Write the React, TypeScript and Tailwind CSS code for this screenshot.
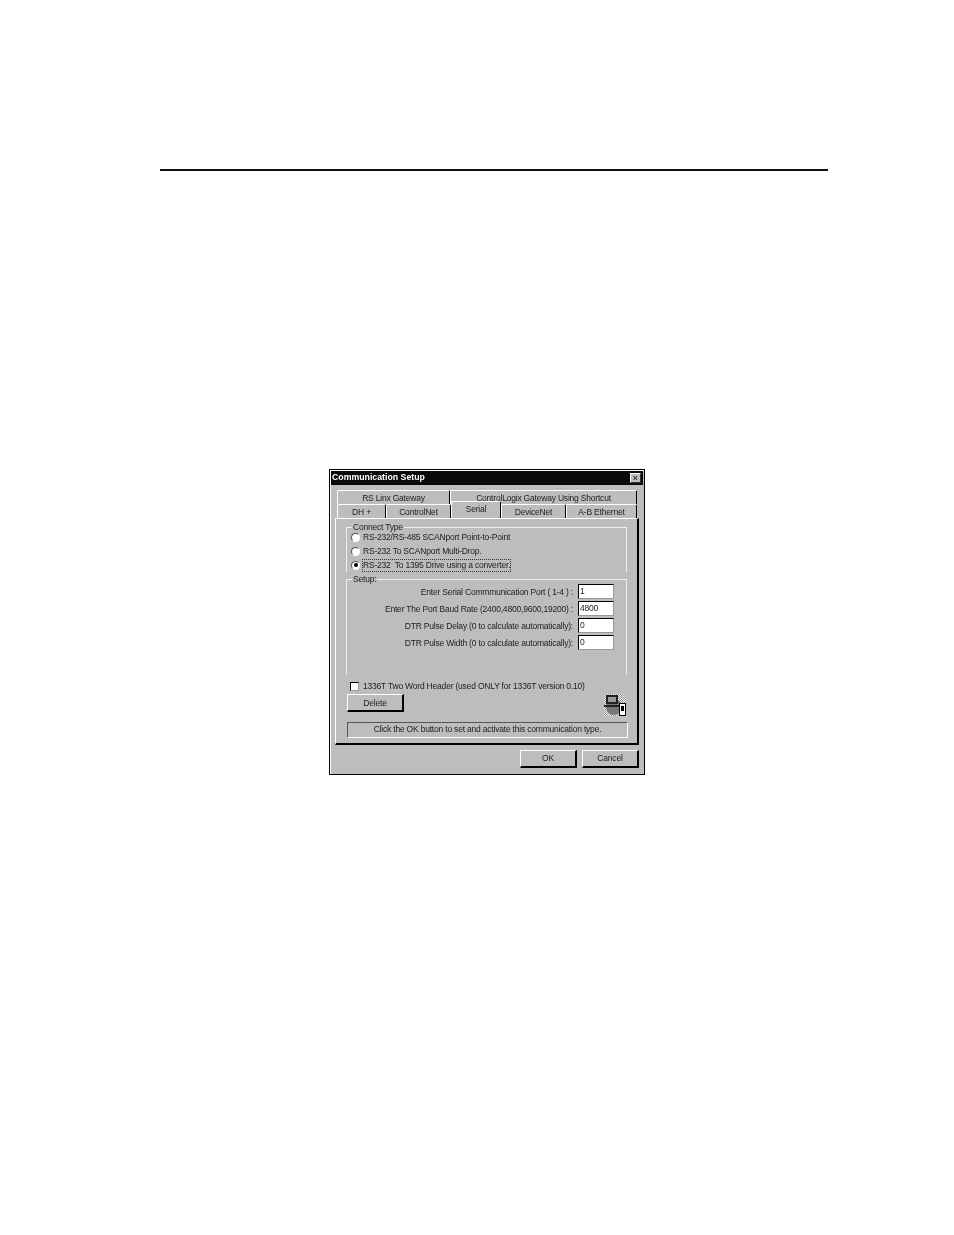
import { ReactNode } from "react";

const raised = "border border-t-white border-l-white border-r-black border-b-black";

const Tab = ({ label, width, active }: { label: string; width: string; active?: boolean }) => (
    <div
        className={`${width} shrink-0 flex items-center justify-center border-t border-l border-r border-t-white border-l-white border-r-black rounded-t-[2px] ${active ? "h-[17px] -mt-[3px] pb-[1px] relative z-10 bg-[#bdbdbd]" : "h-[14px] pt-[1px]"}`}
    >
        {label}
    </div>
);

const Radio = ({ label, checked, focused }: { label: string; checked?: boolean; focused?: boolean }) => (
    <div className="flex items-center h-[14px]">
        <span className="w-[9px] h-[9px] rounded-full bg-white border border-t-[#555] border-l-[#555] border-r-white border-b-white flex items-center justify-center shrink-0">
            {checked && <span className="w-[4px] h-[4px] rounded-full bg-black" />}
        </span>
        <span className={`ml-[2px] leading-[11px] ${focused ? "border border-dotted border-[#333]" : "border border-transparent"}`}>{label}</span>
    </div>
);

const Field = ({ label, value }: { label: string; value: string }) => (
    <div className="flex items-center justify-end h-[17px]">
        <span className="mr-[5px] mt-[1px]">{label}</span>
        <div className="w-[36px] h-[15px] bg-white border border-t-black border-l-black border-r-[#999] border-b-[#999] pl-[1px] leading-[13px]">{value}</div>
    </div>
);

const Button = ({ children, className }: { children: ReactNode; className: string }) => (
    <button className={`${className} h-[18px] flex items-center justify-center ${raised} border-r-2 border-b-2`}>{children}</button>
);

const DriveIcon = () => (
    <svg width="24" height="24" viewBox="0 0 24 24" className="shrink-0">
        <defs>
            <pattern id="dither" width="2" height="2" patternUnits="userSpaceOnUse">
                <rect width="2" height="2" fill="#eee" />
                <rect width="1" height="1" fill="#999" />
                <rect x="1" y="1" width="1" height="1" fill="#999" />
            </pattern>
        </defs>
        <rect x="1" y="1" width="22" height="22" fill="url(#dither)" />
        <circle cx="11" cy="14" r="8" fill="#777" />
        <rect x="3" y="2" width="12" height="9" fill="#222" />
        <rect x="5" y="4" width="8" height="5" fill="#999" />
        <path d="M1 12h15v2H1z" fill="#222" />
        <rect x="16.5" y="10.5" width="6" height="12" fill="#fff" stroke="#000" />
        <rect x="18" y="13" width="3" height="5" fill="#000" />
    </svg>
);

const App = () => {
    return (
        <div className="w-[954px] h-[1235px] bg-white pt-[169px] pl-[160px] font-['Liberation_Sans',sans-serif]">
            <div className="w-[668px] h-[2px] bg-[#111]" />

            <div className="ml-[169px] mt-[298px] w-[316px] h-[306px] bg-[#bdbdbd] border border-black p-[1px] shadow-[inset_1px_1px_0_#fff] text-[8.5px] tracking-[-0.2px] text-[#222] blur-[0.35px]">
                <div className="h-[14px] bg-[#0a0a0a] flex items-center justify-between pl-[1px] pr-[2px] text-white text-[8.75px] tracking-normal font-bold">
                    <span>Communication Setup</span>
                    <span className="w-[11px] h-[10px] bg-[#bdbdbd] border border-t-white border-l-white border-r-[#333] border-b-[#333] text-black text-[9px] leading-[8px] text-center font-normal">×</span>
                </div>

                <div className="pl-[4px] pt-[5px]">
                    <div className="flex h-[14px] pl-[2px]">
                        <Tab label="RS Linx Gateway" width="w-[113px]" />
                        <Tab label="ControlLogix Gateway Using Shortcut" width="w-[187px]" />
                    </div>
                    <div className="flex h-[14px] pl-[2px]">
                        <Tab label="DH +" width="w-[49px]" />
                        <Tab label="ControlNet" width="w-[65px]" />
                        <Tab label="Serial" width="w-[50px]" active />
                        <Tab label="DeviceNet" width="w-[65px]" />
                        <Tab label="A-B Ethernet" width="w-[71px]" />
                    </div>

                    <div className="w-[304px] h-[227px] border border-t-white border-l-white border-r-[2px] border-b-[2px] border-r-black border-b-black pl-[10px] pr-[10px]">
                        <fieldset className="w-[281px] h-[49px] border border-[#efefef] border-b-0 mt-[4px]">
                            <legend className="ml-[5px] px-[1px] leading-[8px]">Connect Type</legend>
                            <div className="pl-[4px] -mt-[1px]">
                                <Radio label="RS-232/RS-485 SCANport Point-to-Point" />
                                <Radio label="RS-232 To SCANport Multi-Drop." />
                                <Radio label={"RS-232\u00a0 To 1395 Drive using a converter."} checked focused />
                            </div>
                        </fieldset>

                        <fieldset className="w-[281px] h-[100px] border border-[#efefef] border-b-0 mt-[3px] pr-[12px]">
                            <legend className="ml-[5px] px-[1px] leading-[8px]">Setup:</legend>
                            <Field label="Enter Serial Commmunication Port ( 1-4 ) :" value="1" />
                            <Field label="Enter The Port Baud Rate (2400,4800,9600,19200) :" value="4800" />
                            <Field label="DTR Pulse Delay (0 to calculate automatically):" value="0" />
                            <Field label="DTR Pulse Width (0 to calculate automatically):" value="0" />
                        </fieldset>

                        <div className="flex items-center h-[12px] mt-[5px] pl-[4px]">
                            <span className="w-[9px] h-[9px] bg-white border border-t-black border-l-black border-r-[#999] border-b-[#999]" />
                            <span className="ml-[4px]">1336T Two Word Header (used ONLY for 1336T version 0.10)</span>
                        </div>

                        <div className="flex items-start justify-between mt-[1px] w-[281px]">
                            <Button className="w-[57px] mt-[1px] ml-[1px] pt-[1px]">Delete</Button>
                            <DriveIcon />
                        </div>

                        <div className="w-[281px] h-[16px] mt-[5px] ml-[1px] pb-[2px] border border-t-[#555] border-l-[#555] border-r-white border-b-white flex items-center justify-center">
                            Click the OK button to set and activate this communication type.
                        </div>
                    </div>

                    <div className="flex justify-end gap-[5px] mt-[5px] pr-[4px]">
                        <Button className="w-[57px]">OK</Button>
                        <Button className="w-[57px]">Cancel</Button>
                    </div>
                </div>
            </div>
        </div>
    );
};

export default App;
